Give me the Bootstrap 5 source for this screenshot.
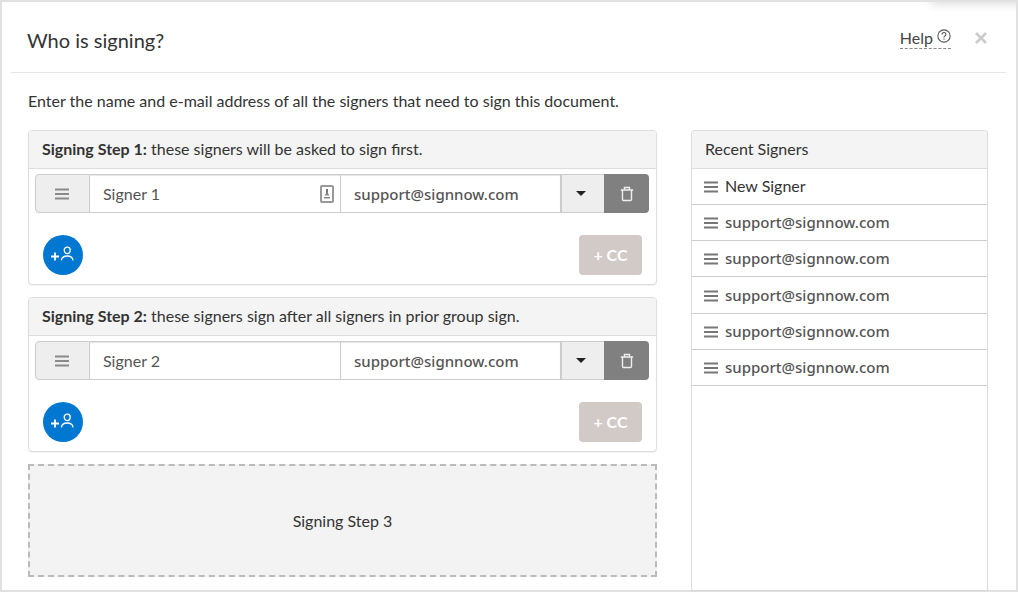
<!DOCTYPE html>
<html lang="en">
<head>
<meta charset="utf-8">
<meta name="viewport" content="width=device-width, initial-scale=1">
<title>Who is signing?</title>
<link href="https://cdn.jsdelivr.net/npm/bootstrap@5.3.0/dist/css/bootstrap.min.css" rel="stylesheet">
<script defer src="https://cdn.jsdelivr.net/npm/bootstrap@5.3.0/dist/js/bootstrap.bundle.min.js"></script>
<style>
  body { font-family: Lato, "Liberation Sans", sans-serif; font-size: 16px; line-height: 24px; color: #333; background: #fff; }
  .dialog-frame { border: 2px solid #e1e1e1; min-height: 100vh; position: relative; }
  .shade-clip { position: absolute; inset: 0; overflow: hidden; pointer-events: none; }
  .corner-shade { position: absolute; top: -10px; right: -10px; width: 96px; height: 10px; box-shadow: 0 0 12px rgba(0,0,0,.2); }
  .dialog-head { margin: 0 10px 0 9px; padding: 2px 19px 0 16px; height: 71px; border-bottom: 1px solid #e5e5e5; }
  .dialog-title { font-size: 20px; line-height: 28px; margin: 4px 0 0; }
  .help-link { color: #444; text-decoration: none; border-bottom: 1px dashed #888; line-height: 20px; }
  .help-link svg { vertical-align: 1px; }
  .close-btn { padding: 0; border: 0; background: none; line-height: 0; }
  .dialog-body { padding: 16px 28px 0 26px; }
  .intro { margin-bottom: 17px; }
  .columns { gap: 34px; }
  .steps { gap: 12px; padding-bottom: 13px; min-width: 0; }
  .side-col { width: 297px; }
  .panel { border: 1px solid #ddd; border-radius: 4px; box-shadow: 0 1px 1px rgba(0,0,0,.05); background: #fff; }
  .open-end { border-bottom: 0; border-radius: 4px 4px 0 0; }
  .panel-top { background: #f4f4f4; border-bottom: 1px solid #ddd; border-radius: 3px 3px 0 0; padding: 6px 13px; height: 38px; font-size: 16px; line-height: 24px; margin: 0; font-weight: 400; }
  .step-body { padding: 5px 7px 9px 6px; }
  .signer-row { height: 39px; }
  .signer-row > * { border: 1px solid #ccc; border-left-width: 0; border-radius: 0; }
  .signer-row > :first-child { border-left-width: 1px; border-radius: 4px 0 0 4px; }
  .signer-row > :last-child { border-radius: 0 4px 4px 0; }
  .grip { width: 55px; background: #eee; color: #8a8a8a; padding: 0 2px 0 0; }
  .field-cell { box-shadow: inset 0 1px 1px rgba(0,0,0,.1); min-width: 0; }
  .field-cell input { border: 0; background: transparent; color: #555; padding: 0 13px; width: 100%; height: 100%; outline-offset: -2px; }
  .field-cell svg { flex: none; margin-right: 6px; }
  .email-cell { width: 221px; }
  .signer-row > .email-cell { border-right-width: 2px; }
  .mail-text, .field-cell input.mail-text { font-family: "Noto Sans", sans-serif; font-size: 15px; font-weight: 500; color: #555; }
  .menu-btn { width: 42px; background: #eee; padding: 0 4px 0 0; color: #222; }
  .signer-row > .menu-btn { border-right-width: 0; }
  .trash-btn { width: 45px; background: #808080; padding: 0; color: #eee; }
  .signer-row > .trash-btn { border: 0; }
  .signer-row button svg, .add-btn svg { display: block; margin: auto; }
  .step-actions { padding: 22px 7px 0 8px; }
  .add-btn { width: 40px; height: 40px; border: 0; border-radius: 50%; background: #0077d0; padding: 0 3px 3px 0; color: #fff; }
  .cc-btn { width: 63px; height: 40px; border: 0; border-radius: 4px; background: #d2cac7; color: #fff; font-weight: 700; padding: 0; }
  .next-step { border: 2px dashed #bbb; background: #f3f3f3; height: 113px; color: #333; padding: 0; }
  .recent-item { border: 0; border-bottom: 1px solid #ccc; padding: 0 12px 1px; background: none; gap: 7px; height: 100%; color: #333; }
  .recent-item.mail-text { color: #555; }
  .recent-item svg { color: #777; margin-top: 2px; }
  .signer-list { display: grid; grid-template-rows: 36px 36px 36px 37px 36px 36px; }
</style>
</head>
<body>
<svg class="d-none">
  <symbol id="bars" viewBox="0 0 14 12"><path d="M0 1.500h14M0 6h14M0 10.500h14" stroke="currentColor" stroke-width="1.800"/></symbol>
  <symbol id="trash" viewBox="0 0 14 16"><path d="M.8 4h12.400M4.500 3.500V1.500h5v2M2.500 4v9.500q0 1 1 1h7q1 0 1-1V4" fill="none" stroke="currentColor" stroke-width="1.400"/></symbol>
  <symbol id="caret" viewBox="0 0 10 5"><path d="M0 0h10L5 5z" fill="currentColor"/></symbol>
  <symbol id="adduser" viewBox="0 0 24 16"><path d="M1 10.500h8M5 6.500v8" stroke="currentColor" stroke-width="1.800"/><path d="M14.200 4a3 2.800 0 0 1 6 0c0 2-1.300 3.600-3 3.600S14.200 6 14.200 4zM11.300 14.300c.5-2.800 2.900-4.300 5.900-4.300s5.400 1.500 5.900 4.300" fill="none" stroke="currentColor" stroke-width="1.300"/></symbol>
</svg>
<main class="dialog-frame d-flex flex-column">
  <div class="shade-clip"><div class="corner-shade"></div></div>
  <header class="dialog-head d-flex align-items-center justify-content-between">
    <h1 class="dialog-title fw-normal">Who is signing?</h1>
    <div class="d-flex align-items-center gap-4">
      <a href="#" class="help-link">Help
        <svg width="14" height="14" viewBox="0 0 13 13" fill="none" stroke="#555"><circle cx="6.500" cy="6.500" r="5.700"/><path d="M4.700 5.200q0-1.900 1.800-1.900t1.800 1.700q0 1-1.100 1.500-.7.400-.7 1.300M6.500 8.800v1.200"/></svg></a>
      <button type="button" class="close-btn" aria-label="Close"><svg width="12" height="12" viewBox="0 0 12 12"><path d="M1 1l10 10M11 1L1 11" stroke="#ccc" stroke-width="2.800"/></svg></button>
    </div>
  </header>
  <div class="dialog-body d-flex flex-column flex-grow-1">
    <p class="intro">Enter the name and e-mail address of all the signers that need to sign this document.</p>
    <div class="columns d-flex flex-grow-1">
      <div class="steps d-flex flex-column flex-grow-1">
        <section class="panel">
          <h2 class="panel-top"><strong>Signing Step 1:</strong> these signers will be asked to sign first.</h2>
          <div class="step-body">
            <div class="signer-row d-flex">
              <button type="button" class="grip" aria-label="Move signer"><svg width="14" height="12"><use href="#bars"/></svg></button>
              <div class="field-cell d-flex align-items-center flex-grow-1">
                <input type="text" value="Signer 1" aria-label="Signer name">
                <svg width="14" height="18" viewBox="0 0 14 18"><rect x="1" y="1" width="12" height="16" rx="1" fill="#fff" stroke="#999" stroke-width="2"/><path d="M7 4v5" stroke="#777" stroke-width="2"/><path d="M4.500 10.500L7 7l2.500 3.500zM4 12h6v1.500H4z" fill="#888"/></svg>
              </div>
              <div class="field-cell email-cell flex-shrink-0"><input type="email" class="mail-text" value="support@signnow.com" aria-label="Signer e-mail"></div>
              <button type="button" class="menu-btn" aria-label="Options"><svg width="10" height="5"><use href="#caret"/></svg></button>
              <button type="button" class="trash-btn" aria-label="Delete"><svg width="14" height="16"><use href="#trash"/></svg></button>
            </div>
            <div class="step-actions d-flex justify-content-between">
              <button type="button" class="add-btn" aria-label="Add signer"><svg width="24" height="16"><use href="#adduser"/></svg></button>
              <button type="button" class="cc-btn">+ CC</button>
            </div>
          </div>
        </section>
        <section class="panel">
          <h2 class="panel-top"><strong>Signing Step 2:</strong> these signers sign after all signers in prior group sign.</h2>
          <div class="step-body">
            <div class="signer-row d-flex">
              <button type="button" class="grip" aria-label="Move signer"><svg width="14" height="12"><use href="#bars"/></svg></button>
              <div class="field-cell d-flex align-items-center flex-grow-1">
                <input type="text" value="Signer 2" aria-label="Signer name">
              </div>
              <div class="field-cell email-cell flex-shrink-0"><input type="email" class="mail-text" value="support@signnow.com" aria-label="Signer e-mail"></div>
              <button type="button" class="menu-btn" aria-label="Options"><svg width="10" height="5"><use href="#caret"/></svg></button>
              <button type="button" class="trash-btn" aria-label="Delete"><svg width="14" height="16"><use href="#trash"/></svg></button>
            </div>
            <div class="step-actions d-flex justify-content-between">
              <button type="button" class="add-btn" aria-label="Add signer"><svg width="24" height="16"><use href="#adduser"/></svg></button>
              <button type="button" class="cc-btn">+ CC</button>
            </div>
          </div>
        </section>
        <button type="button" class="next-step w-100">Signing Step 3</button>
      </div>
      <aside class="side-col panel open-end flex-shrink-0">
        <h2 class="panel-top">Recent Signers</h2>
        <ul class="signer-list list-unstyled mb-0">
          <li><button type="button" class="recent-item d-flex align-items-center w-100"><svg width="14" height="12"><use href="#bars"/></svg>New Signer</button></li>
          <li><button type="button" class="recent-item mail-text d-flex align-items-center w-100"><svg width="14" height="12"><use href="#bars"/></svg>support@signnow.com</button></li>
          <li><button type="button" class="recent-item mail-text d-flex align-items-center w-100"><svg width="14" height="12"><use href="#bars"/></svg>support@signnow.com</button></li>
          <li><button type="button" class="recent-item mail-text d-flex align-items-center w-100"><svg width="14" height="12"><use href="#bars"/></svg>support@signnow.com</button></li>
          <li><button type="button" class="recent-item mail-text d-flex align-items-center w-100"><svg width="14" height="12"><use href="#bars"/></svg>support@signnow.com</button></li>
          <li><button type="button" class="recent-item mail-text d-flex align-items-center w-100"><svg width="14" height="12"><use href="#bars"/></svg>support@signnow.com</button></li>
        </ul>
      </aside>
    </div>
  </div>
</main>
</body>
</html>
